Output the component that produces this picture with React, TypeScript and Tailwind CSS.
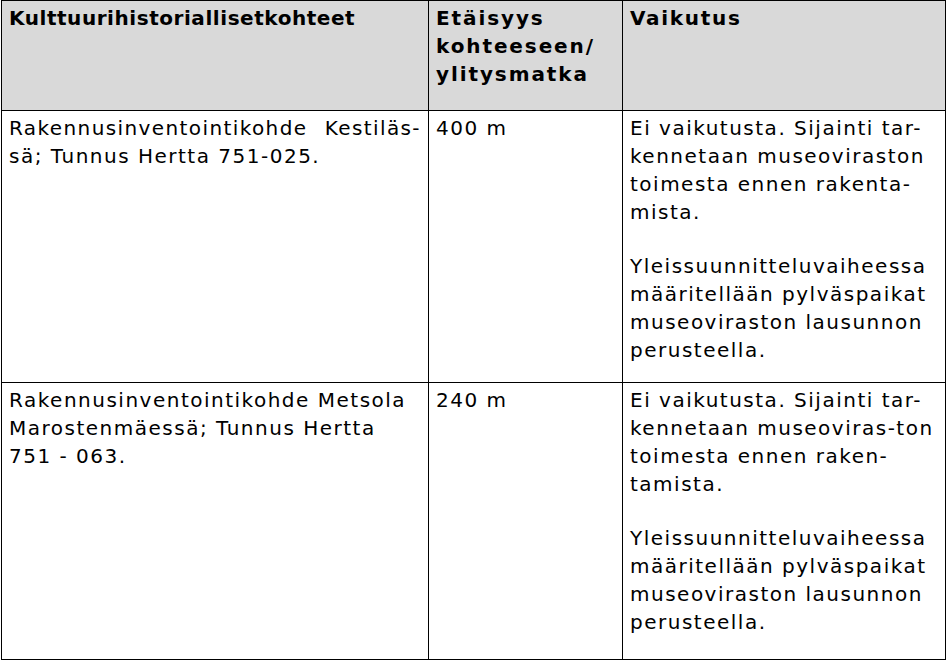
import React from "react";

const cell = "border border-black align-top px-[7px] pt-[3px] text-left";

export default function App() {
  return (
    <div className="w-[948px] h-[663px] bg-white overflow-hidden pl-[1px]" style={{ fontFamily: '"DejaVu Sans", Verdana, sans-serif' }}>
      <table className="border-collapse table-fixed text-[20px] leading-[28px] text-black">
        <colgroup>
          <col className="w-[427px]" />
          <col className="w-[194px]" />
          <col className="w-[323px]" />
        </colgroup>
        <thead>
          <tr className="h-[110px] bg-[#d9d9d9] font-bold">
            <th className={`${cell} tracking-[0.55px]`}>Kulttuurihistoriallisetkohteet</th>
            <th className={`${cell} tracking-[1.9px]`}>Etäisyys<br />kohteeseen/<br />ylitysmatka</th>
            <th className={`${cell} tracking-[1.7px]`}>Vaikutus</th>
          </tr>
        </thead>
        <tbody className="tracking-[1.5px]">
          <tr className="h-[272px]">
            <td className={cell}>
              <div className="[text-align-last:justify] tracking-[1.4px]">Rakennusinventointikohde Kestiläs-</div>
              <div>sä; Tunnus Hertta 751-025.</div>
            </td>
            <td className={cell}>400 m</td>
            <td className={cell}>
              <p className="mb-[26px]">Ei vaikutusta. Sijainti tar-<br />kennetaan museoviraston<br />toimesta ennen rakenta-<br />mista.</p>
              <p>Yleissuunnitteluvaiheessa<br />määritellään pylväspaikat<br />museoviraston lausunnon<br />perusteella.</p>
            </td>
          </tr>
          <tr className="h-[277px]">
            <td className={cell}>
              Rakennusinventointikohde Metsola<br />Marostenmäessä; Tunnus Hertta<br />751 - 063.
            </td>
            <td className={cell}>240 m</td>
            <td className={cell}>
              <p className="mb-[26px]">Ei vaikutusta. Sijainti tar-<br />kennetaan museoviras-ton<br />toimesta ennen raken-<br />tamista.</p>
              <p>Yleissuunnitteluvaiheessa<br />määritellään pylväspaikat<br />museoviraston lausunnon<br />perusteella.</p>
            </td>
          </tr>
        </tbody>
      </table>
    </div>
  );
}
